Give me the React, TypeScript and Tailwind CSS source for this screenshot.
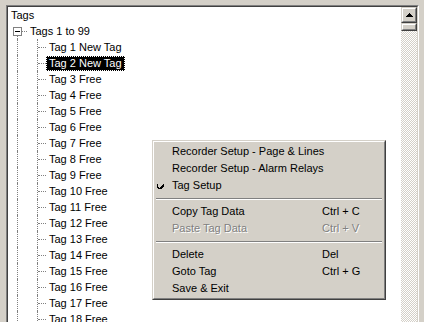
import React from 'react';

const font = "font-['Liberation_Sans',Arial,sans-serif] text-[11px] leading-[13px]";

const tags = [
    'Tag 1 New Tag', 'Tag 2 New Tag', 'Tag 3 Free', 'Tag 4 Free', 'Tag 5 Free', 'Tag 6 Free',
    'Tag 7 Free', 'Tag 8 Free', 'Tag 9 Free', 'Tag 10 Free', 'Tag 11 Free', 'Tag 12 Free',
    'Tag 13 Free', 'Tag 14 Free', 'Tag 15 Free', 'Tag 16 Free', 'Tag 17 Free', 'Tag 18 Free',
    'Tag 19 Free', 'Tag 20 Free',
];

function Label({ text, selected }: { text: string, selected?: boolean }) {
    return (
        <span
            className={
                selected
                    ? 'whitespace-nowrap border border-dotted border-white bg-black px-[2px] text-white'
                    : 'whitespace-nowrap border border-transparent px-[2px] text-black'
            }
        >
            {text}
        </span>
    );
}

function TagRow({ text, selected }: { text: string, selected?: boolean }) {
    return (
        <div className="flex h-4 items-center">
            <div className="h-full w-[9px] shrink-0" />
            <div className="h-full w-[20px] shrink-0 border-l border-dotted border-[#808080]" />
            <div className="flex h-full w-[9px] shrink-0 items-center border-l border-dotted border-[#808080]">
                <div className="h-0 w-full border-t border-dotted border-[#808080]" />
            </div>
            <Label text={text} selected={selected} />
        </div>
    );
}

function Raised({ className, children }: { className?: string, children?: React.ReactNode }) {
    return (
        <div className={`border border-t-[#d4d0c8] border-l-[#d4d0c8] border-r-[#404040] border-b-[#404040] ${className ?? ''}`}>
            <div className="flex h-full w-full items-center justify-center border border-t-white border-l-white border-r-[#808080] border-b-[#808080] bg-[#d4d0c8]">
                {children}
            </div>
        </div>
    );
}

function MenuItem({ label, shortcut, disabled, checked }: { label: string, shortcut?: string, disabled?: boolean, checked?: boolean }) {
    const tone = disabled ? 'text-[#808080] [text-shadow:1px_1px_0_#ffffff]' : 'text-black';
    return (
        <div className={`relative flex h-[17px] items-center pl-[17px] ${tone}`}>
            {checked && (
                <svg className="absolute left-[2px] top-[5px]" width="7" height="7" viewBox="0 0 7 7" shapeRendering="crispEdges">
                    <path d="M0 2h1v3h1v1h1v-1h1v-1h1v-1h1v-1h1v3h-1v1h-1v1h-1v1h-2v-1h-1v-1h-1z" fill="#000" />
                </svg>
            )}
            <span className="w-[150px] shrink-0 whitespace-nowrap">{label}</span>
            {shortcut && <span className="whitespace-nowrap">{shortcut}</span>}
        </div>
    );
}

function Separator() {
    return (
        <div className="flex h-[9px] items-center px-[1px]">
            <div className="h-[2px] w-full border-t border-b border-t-[#808080] border-b-white" />
        </div>
    );
}

export default function App() {
    return (
        <div className={`relative h-[322px] w-[424px] overflow-hidden bg-[#d4d0c8] pl-[6px] pt-[5px] ${font}`}>
            <div className="h-[340px] w-[413px] border-l border-t border-r border-l-[#808080] border-t-[#808080] border-r-white">
                <div className="flex h-full border-l border-t border-r border-l-[#404040] border-t-[#404040] border-r-[#d4d0c8]">
                    {/* tree */}
                    <div className="flex-1 bg-white">
                        <div className="flex h-4 items-center">
                            <Label text="Tags" />
                        </div>
                        <div className="flex h-4 items-center">
                            <div className="h-full w-[5px] shrink-0" />
                            <div className="flex h-full w-[9px] shrink-0 flex-col">
                                <div className="h-[4px]" />
                                <div className="flex h-[9px] items-center justify-center border border-[#808080] bg-white">
                                    <div className="h-px w-[5px] bg-black" />
                                </div>
                                <div className="ml-[4px] flex-1 border-l border-dotted border-[#808080]" />
                            </div>
                            <div className="h-0 w-[5px] shrink-0 border-t border-dotted border-[#808080]" />
                            <Label text="Tags 1 to 99" />
                        </div>
                        {tags.map((t, i) => (
                            <TagRow key={t} text={t} selected={i === 1} />
                        ))}
                    </div>
                    {/* scrollbar */}
                    <div className="flex w-4 shrink-0 flex-col">
                        <Raised className="h-4">
                            <svg width="7" height="4" viewBox="0 0 7 4" shapeRendering="crispEdges">
                                <path d="M3 0h1v1h1v1h1v1h1v1h-7v-1h1v-1h1v-1h1z" fill="#000" />
                            </svg>
                        </Raised>
                        <Raised className="h-2" />
                        <div className="flex-1 bg-[image:repeating-conic-gradient(#d4d0c8_0%_25%,#ffffff_0%_50%)] bg-size-[2px_2px]" />
                    </div>
                </div>
            </div>

            {/* context menu */}
            <div className="absolute left-[152px] top-[140px] w-[234px] border border-t-[#d4d0c8] border-l-[#d4d0c8] border-r-[#404040] border-b-[#404040] bg-[#d4d0c8]">
                <div className="border border-t-white border-l-white border-r-[#808080] border-b-[#808080] p-px">
                    <MenuItem label="Recorder Setup - Page & Lines" />
                    <MenuItem label="Recorder Setup - Alarm Relays" />
                    <MenuItem label="Tag Setup" checked />
                    <Separator />
                    <MenuItem label="Copy Tag Data" shortcut="Ctrl + C" />
                    <MenuItem label="Paste Tag Data" shortcut="Ctrl + V" disabled />
                    <Separator />
                    <MenuItem label="Delete" shortcut="Del" />
                    <MenuItem label="Goto Tag" shortcut="Ctrl + G" />
                    <MenuItem label="Save & Exit" />
                </div>
            </div>
        </div>
    );
}
